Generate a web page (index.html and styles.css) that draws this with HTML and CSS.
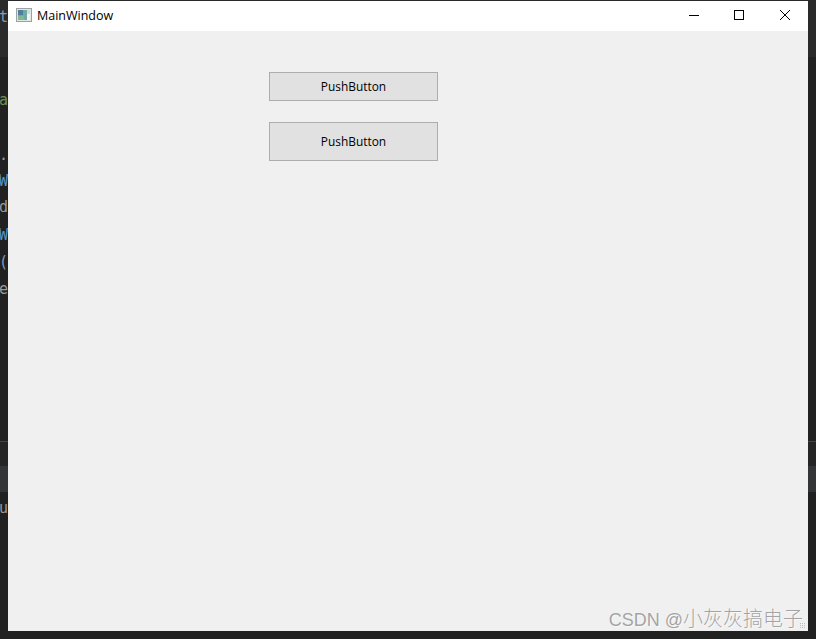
FILE: index.html
```html
<!DOCTYPE html>
<html lang="zh">
<head>
<meta charset="utf-8">
<title>MainWindow</title>
<link rel="stylesheet" href="styles.css">
</head>
<body>
<div class="desktop">
  <div class="editor">
    <div class="code-top"></div>
    <div class="code-area"></div>
    <div class="divider"></div>
    <div class="gap-a"></div>
    <div class="band"></div>
    <div class="rest"></div>
  </div>
  <span class="frag c-blue f1">t</span>
  <span class="frag c-green f2">a</span>
  <span class="frag c-grey f3">.</span>
  <span class="frag c-bright f4">W</span>
  <span class="frag c-grey f5">d</span>
  <span class="frag c-bright f6">W</span>
  <span class="frag c-blue f7">(</span>
  <span class="frag c-grey f8">e</span>
  <span class="frag c-grey f9">u</span>

  <div class="window">
    <header class="titlebar">
      <div class="title-left">
        <svg class="app-icon" width="16" height="14" viewBox="0 0 16 14" aria-hidden="true">
          <rect x="0.5" y="0.5" width="15" height="13" fill="#e4e4e4" stroke="#a0a0a0"/>
          <rect x="2" y="2" width="9" height="10" fill="#6fa9a4"/>
          <rect x="2" y="2" width="5" height="5" fill="#4f7f9c"/>
          <rect x="2" y="8" width="6" height="4" fill="#7fb892"/>
          <rect x="11" y="2" width="3" height="4" fill="#c9dde8"/>
          <rect x="11" y="6" width="3" height="6" fill="#f4f4f4"/>
        </svg>
        <span class="title">MainWindow</span>
      </div>
      <div class="controls">
        <svg class="ctl" width="46" height="30" viewBox="0 0 46 30" aria-hidden="true"><path d="M19 14.5h10" stroke="#000" fill="none"/></svg>
        <svg class="ctl" width="46" height="30" viewBox="0 0 46 30" aria-hidden="true"><rect x="18.5" y="9.5" width="9" height="9" stroke="#000" fill="none"/></svg>
        <svg class="ctl" width="46" height="30" viewBox="0 0 46 30" aria-hidden="true"><path d="M18 9l10 10M28 9l-10 10" stroke="#000" fill="none"/></svg>
      </div>
    </header>
    <main class="central">
      <button class="push short">PushButton</button>
      <button class="push tall">PushButton</button>
    </main>
    <div class="watermark">CSDN @<span class="wm-cjk">小灰灰搞电子</span></div>
    <div class="grip"></div>
  </div>
</div>
</body>
</html>
```

FILE: styles.css
```css
* { box-sizing: border-box; }
html, body { margin: 0; padding: 0; }
body { width: 816px; height: 639px; overflow: hidden; background: #212121; }

.desktop { position: relative; width: 816px; height: 639px; overflow: hidden; }

.editor { display: flex; flex-direction: column; height: 639px; }
.code-top { height: 57px; background: #2a2a2a; }
.code-area { height: 384px; background: #212121; }
.divider { height: 1px; background: #454545; }
.gap-a { height: 24px; background: #252526; }
.band { height: 26px; background: #333536; }
.rest { flex: 1; background: #212121; }

.frag {
  position: absolute;
  left: -1px;
  font: 15px/18px "DejaVu Sans Mono", monospace;
}
.f1 { top: 8px; }
.f2 { top: 91px; }
.f3 { top: 146px; }
.f4 { top: 172px; }
.f5 { top: 198px; }
.f6 { top: 226px; }
.f7 { top: 253px; }
.f8 { top: 280px; }
.f9 { top: 499px; }
.c-blue { color: #7f9cb8; }
.c-green { color: #6a8f55; }
.c-grey { color: #9a9a9a; }
.c-bright { color: #5a96c8; }

.window {
  position: absolute;
  left: 8px;
  top: 1px;
  width: 800px;
  height: 630px;
  display: flex;
  flex-direction: column;
  background: #f0f0f0;
}

.titlebar {
  height: 30px;
  flex: none;
  background: #fff;
  display: flex;
  justify-content: space-between;
  align-items: center;
}
.title-left { display: flex; align-items: center; gap: 5px; padding: 0 0 2px 8px; }
.app-icon { display: block; }
.title { font: 12.5px/18px "Open Sans", "Liberation Sans", sans-serif; color: #000; padding-top: 2px; }
.controls { display: flex; }
.ctl { display: block; }

.central {
  flex: 1;
  display: flex;
  flex-direction: column;
  align-items: flex-start;
  gap: 21px;
  padding: 41px 0 0 261px;
}
.push {
  width: 169px;
  margin: 0;
  padding: 0 0 2px;
  background: #e1e1e1;
  border: 1px solid #adadad;
  border-radius: 0;
  font: 11.9px/16px "Open Sans", "Liberation Sans", sans-serif;
  color: #000;
}
.short { height: 29px; }
.tall { height: 39px; }

.watermark {
  position: absolute;
  right: 5px;
  bottom: -1px;
  font: 18px/24px "Liberation Sans", "Noto Sans CJK SC", sans-serif;
  color: rgba(128, 128, 128, 0.7);
  text-shadow: 1px 1px 1px rgba(255, 255, 255, 0.6);
  white-space: nowrap;
}
.wm-cjk { font-size: 20px; font-weight: 300; }
.grip {
  position: absolute;
  right: 2px;
  bottom: 2px;
  width: 6px;
  height: 6px;
  background: radial-gradient(circle at 0.5px 0.5px, #bdbdbd 0.7px, transparent 0.8px) 0 0 / 2px 2px;
}
```
